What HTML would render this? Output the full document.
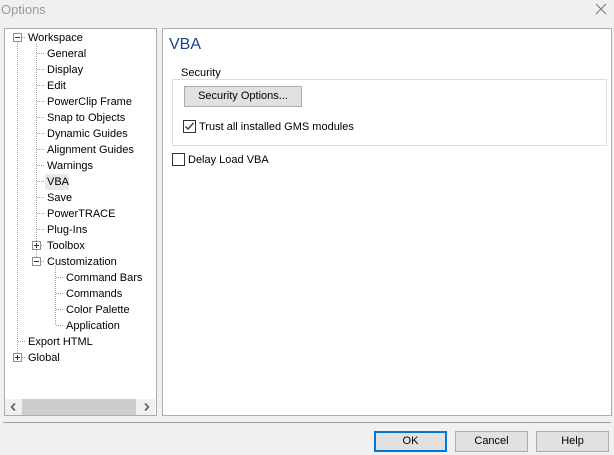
<!DOCTYPE html>
<html><head><style>
body{margin:0;width:614px;height:455px;background:#f0f0f0;font-family:"Liberation Sans",sans-serif;font-size:11px;color:#000;position:relative;overflow:hidden}
.a{position:absolute;white-space:nowrap}
.t{position:absolute;line-height:16px;white-space:nowrap}
.btn{position:absolute;background:#e1e1e1;border:1px solid #adadad;box-sizing:border-box;text-align:center;line-height:18px}
</style></head><body>
<div class="a" style="left:1px;top:2px;font-size:13px;color:#9a9a9a">Options</div>
<svg class="a" style="left:594px;top:2px" width="14" height="14"><path d="M2 2L12 12M12 2L2 12" stroke="#777" stroke-width="1"/></svg>

<div class="a" style="left:4px;top:28px;width:151px;height:386px;background:#fff;border:1px solid #acacac"></div>
<svg class="a" style="left:0;top:0" width="160" height="400">
<g stroke="#a0a0a0" stroke-dasharray="1,1" fill="none">
<line x1="17.5" y1="42" x2="17.5" y2="357"/>
<line x1="36.5" y1="44" x2="36.5" y2="261"/>
<line x1="55.5" y1="266" x2="55.5" y2="325"/>
<line x1="20" y1="37.5" x2="26" y2="37.5"/>
<g>
<line x1="37" y1="53.5" x2="45" y2="53.5"/><line x1="37" y1="69.5" x2="45" y2="69.5"/><line x1="37" y1="85.5" x2="45" y2="85.5"/><line x1="37" y1="101.5" x2="45" y2="101.5"/><line x1="37" y1="117.5" x2="45" y2="117.5"/><line x1="37" y1="133.5" x2="45" y2="133.5"/><line x1="37" y1="149.5" x2="45" y2="149.5"/><line x1="37" y1="165.5" x2="45" y2="165.5"/><line x1="37" y1="181.5" x2="45" y2="181.5"/><line x1="37" y1="197.5" x2="45" y2="197.5"/><line x1="37" y1="213.5" x2="45" y2="213.5"/><line x1="37" y1="229.5" x2="45" y2="229.5"/>
<line x1="41" y1="245.5" x2="45" y2="245.5"/><line x1="41" y1="261.5" x2="45" y2="261.5"/>
<line x1="56" y1="277.5" x2="64" y2="277.5"/><line x1="56" y1="293.5" x2="64" y2="293.5"/><line x1="56" y1="309.5" x2="64" y2="309.5"/><line x1="56" y1="325.5" x2="64" y2="325.5"/>
<line x1="18" y1="341.5" x2="26" y2="341.5"/><line x1="22" y1="357.5" x2="26" y2="357.5"/>
</g></g>
<g fill="#fff" stroke="#919191">
<rect x="13.5" y="33.5" width="8" height="8"/><rect x="32.5" y="241.5" width="8" height="8"/><rect x="32.5" y="257.5" width="8" height="8"/><rect x="13.5" y="353.5" width="8" height="8"/>
</g>
<g stroke="#333">
<line x1="15" y1="37.5" x2="20" y2="37.5"/>
<line x1="34" y1="245.5" x2="39" y2="245.5"/><line x1="36.5" y1="243" x2="36.5" y2="248"/>
<line x1="34" y1="261.5" x2="39" y2="261.5"/>
<line x1="15" y1="357.5" x2="20" y2="357.5"/><line x1="17.5" y1="355" x2="17.5" y2="360"/>
</g>
</svg>
<div class="a" style="left:45px;top:174px;width:24px;height:16px;background:#e8e8e8"></div>
<div class="t" style="left:28px;top:30px">Workspace</div>
<div class="t" style="left:47px;top:46px">General</div>
<div class="t" style="left:47px;top:62px">Display</div>
<div class="t" style="left:47px;top:78px">Edit</div>
<div class="t" style="left:47px;top:94px">PowerClip Frame</div>
<div class="t" style="left:47px;top:110px">Snap to Objects</div>
<div class="t" style="left:47px;top:126px">Dynamic Guides</div>
<div class="t" style="left:47px;top:142px">Alignment Guides</div>
<div class="t" style="left:47px;top:158px">Warnings</div>
<div class="t" style="left:47px;top:174px">VBA</div>
<div class="t" style="left:47px;top:190px">Save</div>
<div class="t" style="left:47px;top:206px">PowerTRACE</div>
<div class="t" style="left:47px;top:222px">Plug-Ins</div>
<div class="t" style="left:47px;top:238px">Toolbox</div>
<div class="t" style="left:47px;top:254px">Customization</div>
<div class="t" style="left:66px;top:270px">Command Bars</div>
<div class="t" style="left:66px;top:286px">Commands</div>
<div class="t" style="left:66px;top:302px">Color Palette</div>
<div class="t" style="left:66px;top:318px">Application</div>
<div class="t" style="left:28px;top:334px">Export HTML</div>
<div class="t" style="left:28px;top:350px">Global</div>
<div class="a" style="left:5px;top:399px;width:150px;height:16px;background:#f0f0f0"></div>
<div class="a" style="left:22px;top:399px;width:114px;height:16px;background:#cdcdcd"></div>
<svg class="a" style="left:5px;top:399px" width="150" height="16"><path d="M10 4.5L6.5 8L10 11.5" stroke="#606060" stroke-width="1.6" fill="none"/><path d="M140 4.5L143.5 8L140 11.5" stroke="#606060" stroke-width="1.6" fill="none"/></svg>

<div class="a" style="left:162px;top:28px;width:448px;height:386px;background:#fff;border:1px solid #acacac"></div>
<div class="a" style="left:169px;top:36px;font-size:16px;color:#1e3f8f">VBA</div>
<div class="a" style="left:172px;top:79px;width:433px;height:65px;border:1px solid #dcdcdc"></div>
<div class="a" style="left:178px;top:67px;background:#fff;padding:0 3px">Security</div>
<div class="btn" style="left:184px;top:86px;width:118px;height:21px">Security Options...</div>
<div class="a" style="left:183px;top:120px;width:13px;height:13px;border:1px solid #333;box-sizing:border-box;background:#fff"></div>
<svg class="a" style="left:183px;top:120px" width="13" height="13"><path d="M2.5 6.5L5 9L10.5 3" stroke="#333" stroke-width="1.3" fill="none"/></svg>
<div class="a" style="left:199px;top:121px">Trust all installed GMS modules</div>
<div class="a" style="left:172px;top:153px;width:13px;height:13px;border:1px solid #333;box-sizing:border-box;background:#fff"></div>
<div class="a" style="left:188px;top:154px">Delay Load VBA</div>

<div class="a" style="left:3px;top:422px;width:608px;height:1px;background:#a0a0a0"></div>
<div class="btn" style="left:374px;top:431px;width:73px;height:21px;border:2px solid #0078d7;line-height:17px">OK</div>
<div class="btn" style="left:455px;top:431px;width:73px;height:21px">Cancel</div>
<div class="btn" style="left:536px;top:431px;width:73px;height:21px">Help</div>
</body></html>
